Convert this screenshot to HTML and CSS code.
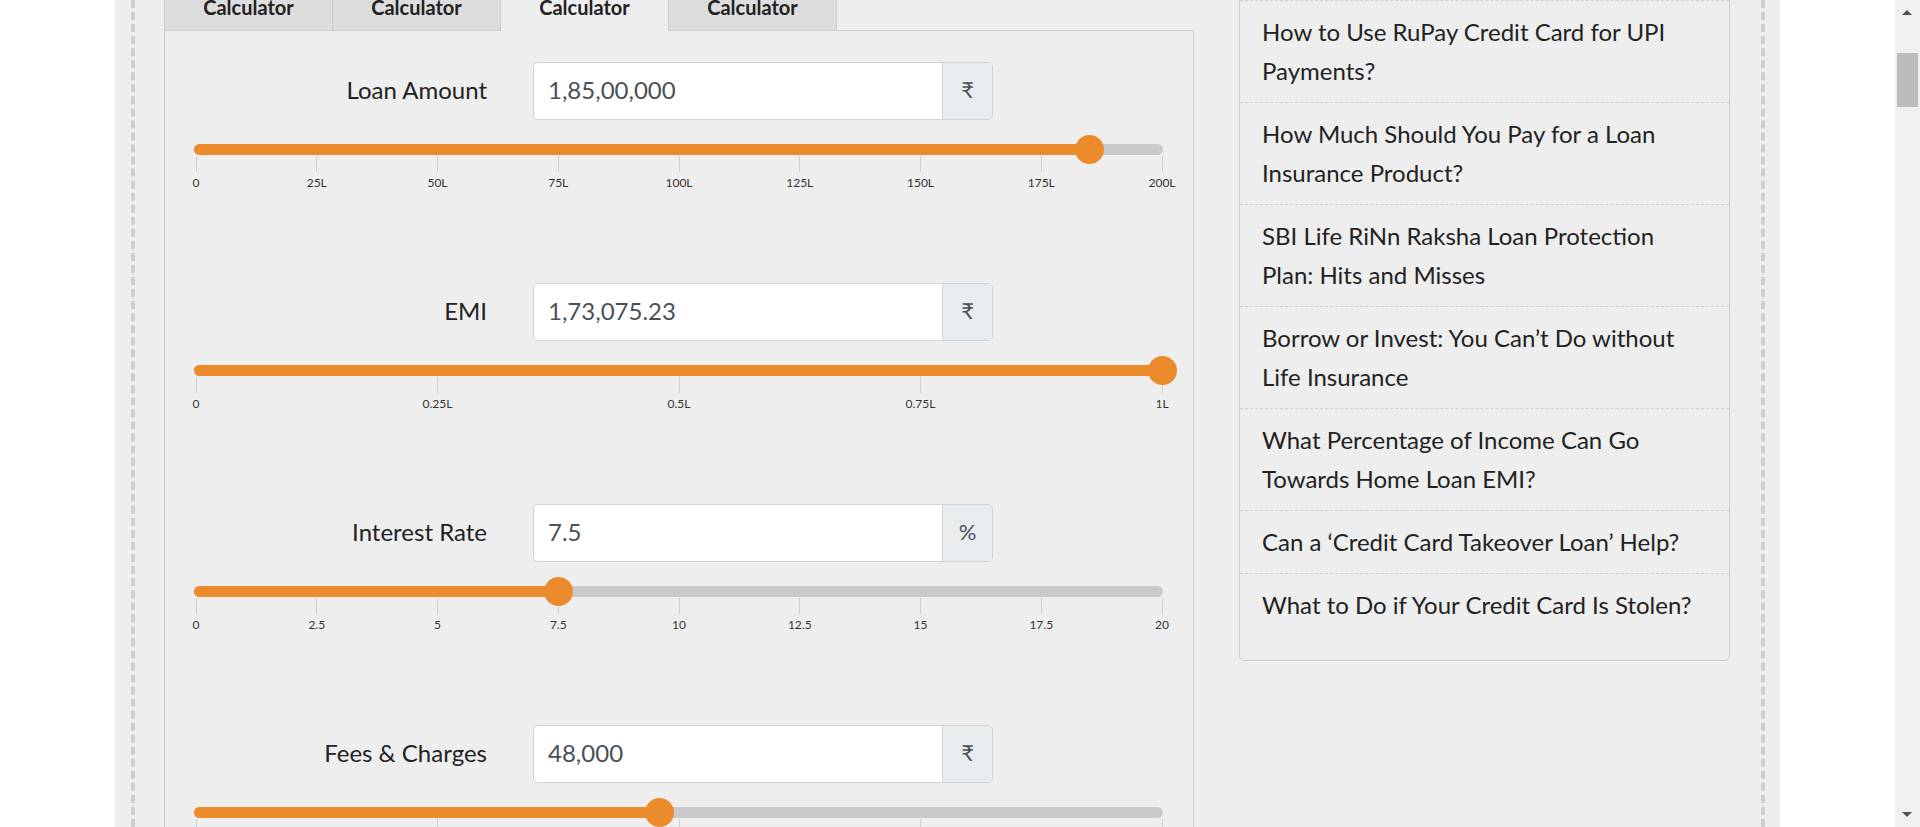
FILE: index.html
```html
<!DOCTYPE html>
<html lang="en">
<head>
<meta charset="utf-8">
<title>EMI Calculator</title>
<link rel="stylesheet" href="styles.css">
</head>
<body>
<div class="viewport">
  <div class="page">
    <div class="frame">
      <main class="calc">
        <div class="tabs">
          <div class="tab">Calculator</div>
          <div class="tab">Calculator</div>
          <div class="tab active">Calculator</div>
          <div class="tab">Calculator</div>
        </div>
        <div class="panel">
          <div class="field">
            <div class="row">
              <div class="label">Loan Amount</div>
              <div class="input-group"><div class="input">1,85,00,000</div><div class="addon">₹</div></div>
            </div>
            <div class="slider" style="--v:92.5%">
              <div class="track"></div>
              <div class="scale">
                <div class="fill"></div>
                <div class="tick" style="left:0%"><span class="line"></span><span class="num">0</span></div>
                <div class="tick" style="left:12.5%"><span class="line"></span><span class="num">25L</span></div>
                <div class="tick" style="left:25%"><span class="line"></span><span class="num">50L</span></div>
                <div class="tick" style="left:37.5%"><span class="line"></span><span class="num">75L</span></div>
                <div class="tick" style="left:50%"><span class="line"></span><span class="num">100L</span></div>
                <div class="tick" style="left:62.5%"><span class="line"></span><span class="num">125L</span></div>
                <div class="tick" style="left:75%"><span class="line"></span><span class="num">150L</span></div>
                <div class="tick" style="left:87.5%"><span class="line"></span><span class="num">175L</span></div>
                <div class="tick" style="left:100%"><span class="line"></span><span class="num">200L</span></div>
                <div class="thumb"></div>
              </div>
            </div>
          </div>

          <div class="field">
            <div class="row">
              <div class="label">EMI</div>
              <div class="input-group"><div class="input">1,73,075.23</div><div class="addon">₹</div></div>
            </div>
            <div class="slider" style="--v:100%">
              <div class="track"></div>
              <div class="scale">
                <div class="fill"></div>
                <div class="tick" style="left:0%"><span class="line"></span><span class="num">0</span></div>
                <div class="tick" style="left:25%"><span class="line"></span><span class="num">0.25L</span></div>
                <div class="tick" style="left:50%"><span class="line"></span><span class="num">0.5L</span></div>
                <div class="tick" style="left:75%"><span class="line"></span><span class="num">0.75L</span></div>
                <div class="tick" style="left:100%"><span class="line"></span><span class="num">1L</span></div>
                <div class="thumb"></div>
              </div>
            </div>
          </div>

          <div class="field">
            <div class="row">
              <div class="label">Interest Rate</div>
              <div class="input-group"><div class="input">7.5</div><div class="addon">%</div></div>
            </div>
            <div class="slider" style="--v:37.5%">
              <div class="track"></div>
              <div class="scale">
                <div class="fill"></div>
                <div class="tick" style="left:0%"><span class="line"></span><span class="num">0</span></div>
                <div class="tick" style="left:12.5%"><span class="line"></span><span class="num">2.5</span></div>
                <div class="tick" style="left:25%"><span class="line"></span><span class="num">5</span></div>
                <div class="tick" style="left:37.5%"><span class="line"></span><span class="num">7.5</span></div>
                <div class="tick" style="left:50%"><span class="line"></span><span class="num">10</span></div>
                <div class="tick" style="left:62.5%"><span class="line"></span><span class="num">12.5</span></div>
                <div class="tick" style="left:75%"><span class="line"></span><span class="num">15</span></div>
                <div class="tick" style="left:87.5%"><span class="line"></span><span class="num">17.5</span></div>
                <div class="tick" style="left:100%"><span class="line"></span><span class="num">20</span></div>
                <div class="thumb"></div>
              </div>
            </div>
          </div>

          <div class="field">
            <div class="row">
              <div class="label">Fees &amp; Charges</div>
              <div class="input-group"><div class="input">48,000</div><div class="addon">₹</div></div>
            </div>
            <div class="slider" style="--v:48%">
              <div class="track"></div>
              <div class="scale">
                <div class="fill"></div>
                <div class="tick" style="left:0%"><span class="line"></span><span class="num">0</span></div>
                <div class="tick" style="left:25%"><span class="line"></span><span class="num">0.25L</span></div>
                <div class="tick" style="left:50%"><span class="line"></span><span class="num">0.5L</span></div>
                <div class="tick" style="left:75%"><span class="line"></span><span class="num">0.75L</span></div>
                <div class="tick" style="left:100%"><span class="line"></span><span class="num">1L</span></div>
                <div class="thumb"></div>
              </div>
            </div>
          </div>
        </div>
      </main>

      <aside class="sidebar">
        <ul class="posts">
          <li>How to Use RuPay Credit Card for UPI Payments?</li>
          <li>How Much Should You Pay for a Loan Insurance Product?</li>
          <li>SBI Life RiNn Raksha Loan Protection Plan: Hits and Misses</li>
          <li>Borrow or Invest: You Can’t Do without Life Insurance</li>
          <li>What Percentage of Income Can Go Towards Home Loan EMI?</li>
          <li>Can a ‘Credit Card Takeover Loan’ Help?</li>
          <li>What to Do if Your Credit Card Is Stolen?</li>
        </ul>
      </aside>
    </div>
  </div>
</div>
<div class="scrollbar">
  <span class="arrow up"></span>
  <span class="sb-thumb"></span>
  <span class="arrow down"></span>
</div>
</body>
</html>
```

FILE: styles.css
```css
html, body {
  margin: 0;
  padding: 0;
  height: 100%;
  overflow: hidden;
  background: #ffffff;
}

body {
  font-family: Lato, "Open Sans", "Liberation Sans", sans-serif;
  color: #222;
}

.viewport {
  margin-right: 25px;
  height: 100%;
}

.page {
  width: 1665px;
  margin: 0 auto;
  height: 100%;
  background: #eeeeee;
}

.frame {
  margin: 0 15px 0 16px;
  height: 100%;
  border-left: 4px dashed #cfcfcf;
  border-right: 4px dashed #cfcfcf;
  display: flex;
  align-items: flex-start;
  gap: 45px;
  padding: 0 30px 0 29px;
}

/* ---------- calculator ---------- */
.calc {
  width: 1030px;
  flex: none;
  margin-top: -21px;
}

.tabs {
  display: flex;
  border-bottom: 1px solid #cccccc;
}

.tab {
  width: 167px;
  padding: 15px 0 11px;
  line-height: 24px;
  font-size: 20px;
  font-weight: 700;
  text-align: center;
  color: #222;
  background: #dddddd;
  border: 1px solid #cccccc;
  border-bottom: none;
  margin-right: -1px;
}

.tab.active {
  background: #eeeeee;
  margin-bottom: -1px;
  padding-bottom: 12px;
  position: relative;
}

.panel {
  border-left: 1px solid #cccccc;
  border-right: 1px solid #cccccc;
  padding: 31px 30px 0 29px;
}

.field {
  margin-bottom: 83px;
}

.row {
  display: flex;
  align-items: center;
  gap: 46px;
}

.label {
  width: 293px;
  text-align: right;
  font-size: 24px;
  line-height: 29px;
  padding-bottom: 4px;
  color: #222;
}

.input-group {
  width: 460px;
  height: 58px;
  box-sizing: border-box;
  display: flex;
  border: 1px solid #ced4da;
  border-radius: 5px;
  overflow: hidden;
  background: #ffffff;
}

.input {
  flex: 1;
  display: flex;
  align-items: center;
  padding: 0 0 4px 14px;
  font-size: 24px;
  color: #495057;
}

.addon {
  width: 49px;
  display: flex;
  align-items: center;
  justify-content: center;
  padding-bottom: 3px;
  background: #e9ecef;
  border-left: 1px solid #ced4da;
  font-size: 22px;
  color: #495057;
}

/* ---------- slider ---------- */
.slider {
  position: relative;
  margin-top: 24px;
  height: 56px;
}

.track {
  height: 11px;
  border-radius: 6px;
  background: #cacaca;
}

.scale {
  position: absolute;
  left: 2px;
  right: 1px;
  top: 0;
  bottom: 0;
}

.fill {
  position: absolute;
  left: -2px;
  top: 0;
  height: 11px;
  width: calc(var(--v) + 2px);
  background: #ec8b2c;
  border-radius: 6px 0 0 6px;
}

.thumb {
  position: absolute;
  left: var(--v);
  top: 5.5px;
  width: 29px;
  height: 29px;
  margin: -14.5px 0 0 -14.5px;
  border-radius: 50%;
  background: #ec8b2c;
}

.tick {
  position: absolute;
  top: 12px;
  width: 0;
  display: flex;
  flex-direction: column;
  align-items: center;
}

.tick .line {
  width: 1px;
  height: 16px;
  background: #cfcfcf;
  flex: none;
}

.tick .num {
  margin-top: 4px;
  font-size: 12px;
  line-height: 14px;
  color: #333;
  white-space: nowrap;
}

/* ---------- sidebar ---------- */
.sidebar {
  width: 491px;
  flex: none;
  margin-top: -1px;
  box-sizing: border-box;
  border: 1px solid #cccccc;
  border-radius: 0 0 5px 5px;
  padding-bottom: 24px;
}

.posts {
  list-style: none;
  margin: 0;
  padding: 0;
}

.posts li {
  border-top: 1px dashed #cfcfcf;
  padding: 11px 23px 12px 22px;
  font-size: 24px;
  line-height: 39px;
  color: #222;
}

/* ---------- scrollbar ---------- */
.scrollbar {
  position: fixed;
  top: 0;
  right: 0;
  width: 25px;
  height: 100%;
  background: #f0f0f0;
}

.sb-thumb {
  position: absolute;
  left: 2px;
  top: 53px;
  width: 21px;
  height: 54px;
  background: #bcbcbc;
}

.arrow {
  position: absolute;
  left: 7px;
  width: 0;
  height: 0;
  border-left: 5px solid transparent;
  border-right: 5px solid transparent;
}

.arrow.up {
  top: 10px;
  border-bottom: 5px solid #505050;
}

.arrow.down {
  bottom: 10px;
  border-top: 5px solid #505050;
}
```
